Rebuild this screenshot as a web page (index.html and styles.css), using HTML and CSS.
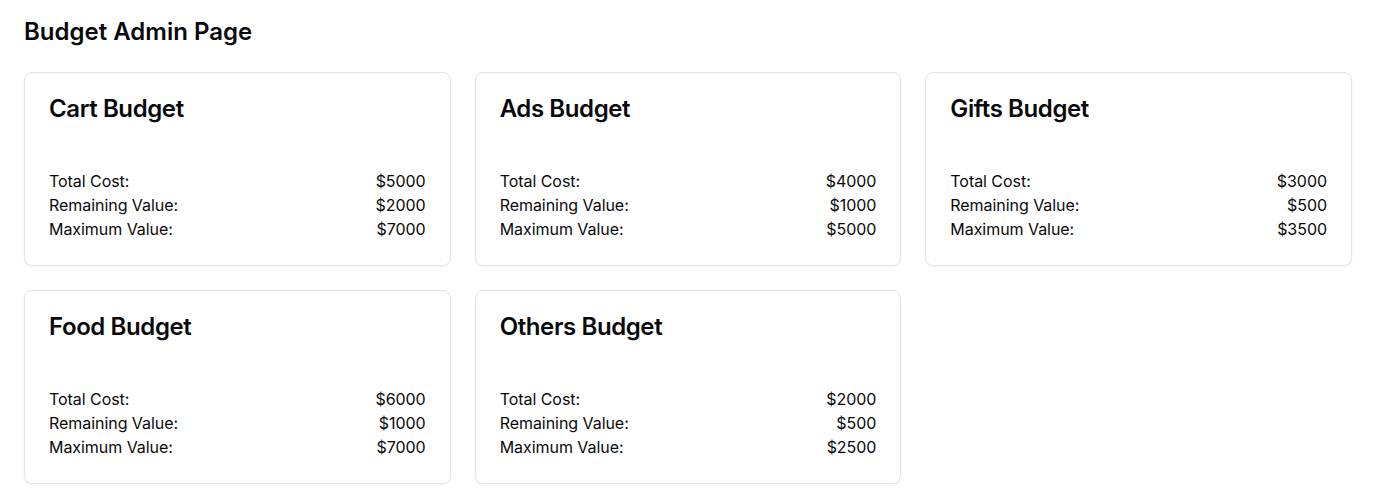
FILE: index.html
```html
<!DOCTYPE html>
<html lang="en">
<head>
<meta charset="utf-8">
<title>Budget Admin Page</title>
<link rel="stylesheet" href="styles.css">
</head>
<body>
<main class="page">
  <h1 class="page-title">Budget Admin Page</h1>
  <div class="grid">
    <section class="card">
      <h2 class="card-title">Cart Budget</h2>
      <div class="rows">
        <div class="row"><span>Total Cost:</span><span>$5000</span></div>
        <div class="row"><span>Remaining Value:</span><span>$2000</span></div>
        <div class="row"><span>Maximum Value:</span><span>$7000</span></div>
      </div>
    </section>
    <section class="card">
      <h2 class="card-title">Ads Budget</h2>
      <div class="rows">
        <div class="row"><span>Total Cost:</span><span>$4000</span></div>
        <div class="row"><span>Remaining Value:</span><span>$1000</span></div>
        <div class="row"><span>Maximum Value:</span><span>$5000</span></div>
      </div>
    </section>
    <section class="card">
      <h2 class="card-title">Gifts Budget</h2>
      <div class="rows">
        <div class="row"><span>Total Cost:</span><span>$3000</span></div>
        <div class="row"><span>Remaining Value:</span><span>$500</span></div>
        <div class="row"><span>Maximum Value:</span><span>$3500</span></div>
      </div>
    </section>
    <section class="card">
      <h2 class="card-title">Food Budget</h2>
      <div class="rows">
        <div class="row"><span>Total Cost:</span><span>$6000</span></div>
        <div class="row"><span>Remaining Value:</span><span>$1000</span></div>
        <div class="row"><span>Maximum Value:</span><span>$7000</span></div>
      </div>
    </section>
    <section class="card">
      <h2 class="card-title">Others Budget</h2>
      <div class="rows">
        <div class="row"><span>Total Cost:</span><span>$2000</span></div>
        <div class="row"><span>Remaining Value:</span><span>$500</span></div>
        <div class="row"><span>Maximum Value:</span><span>$2500</span></div>
      </div>
    </section>
  </div>
</main>
</body>
</html>
```
FILE: styles.css
```css
* { box-sizing: border-box; }
html, body { margin: 0; padding: 0; background: #ffffff; }
body {
  font-family: Inter, "Noto Sans", sans-serif;
  color: #09090b;
}
.page { padding: 16px 24px 24px; }
.page-title {
  margin: 0 0 24px;
  font-size: 24px;
  line-height: 32px;
  font-weight: 600;
}
.grid {
  display: grid;
  grid-template-columns: repeat(3, 1fr);
  gap: 24px;
}
.card {
  border: 1px solid #e4e4e7;
  border-radius: 8px;
  background: #fff;
  box-shadow: 0 1px 2px rgba(0, 0, 0, 0.05);
  padding: 24px;
}
.card-title {
  margin: 0 0 48px;
  font-size: 24px;
  line-height: 24px;
  font-weight: 600;
  letter-spacing: -0.4px;
}
.rows { display: flex; flex-direction: column; }
.row {
  display: flex;
  justify-content: space-between;
  font-size: 16px;
  line-height: 24px;
  letter-spacing: -0.05px;
}
```
